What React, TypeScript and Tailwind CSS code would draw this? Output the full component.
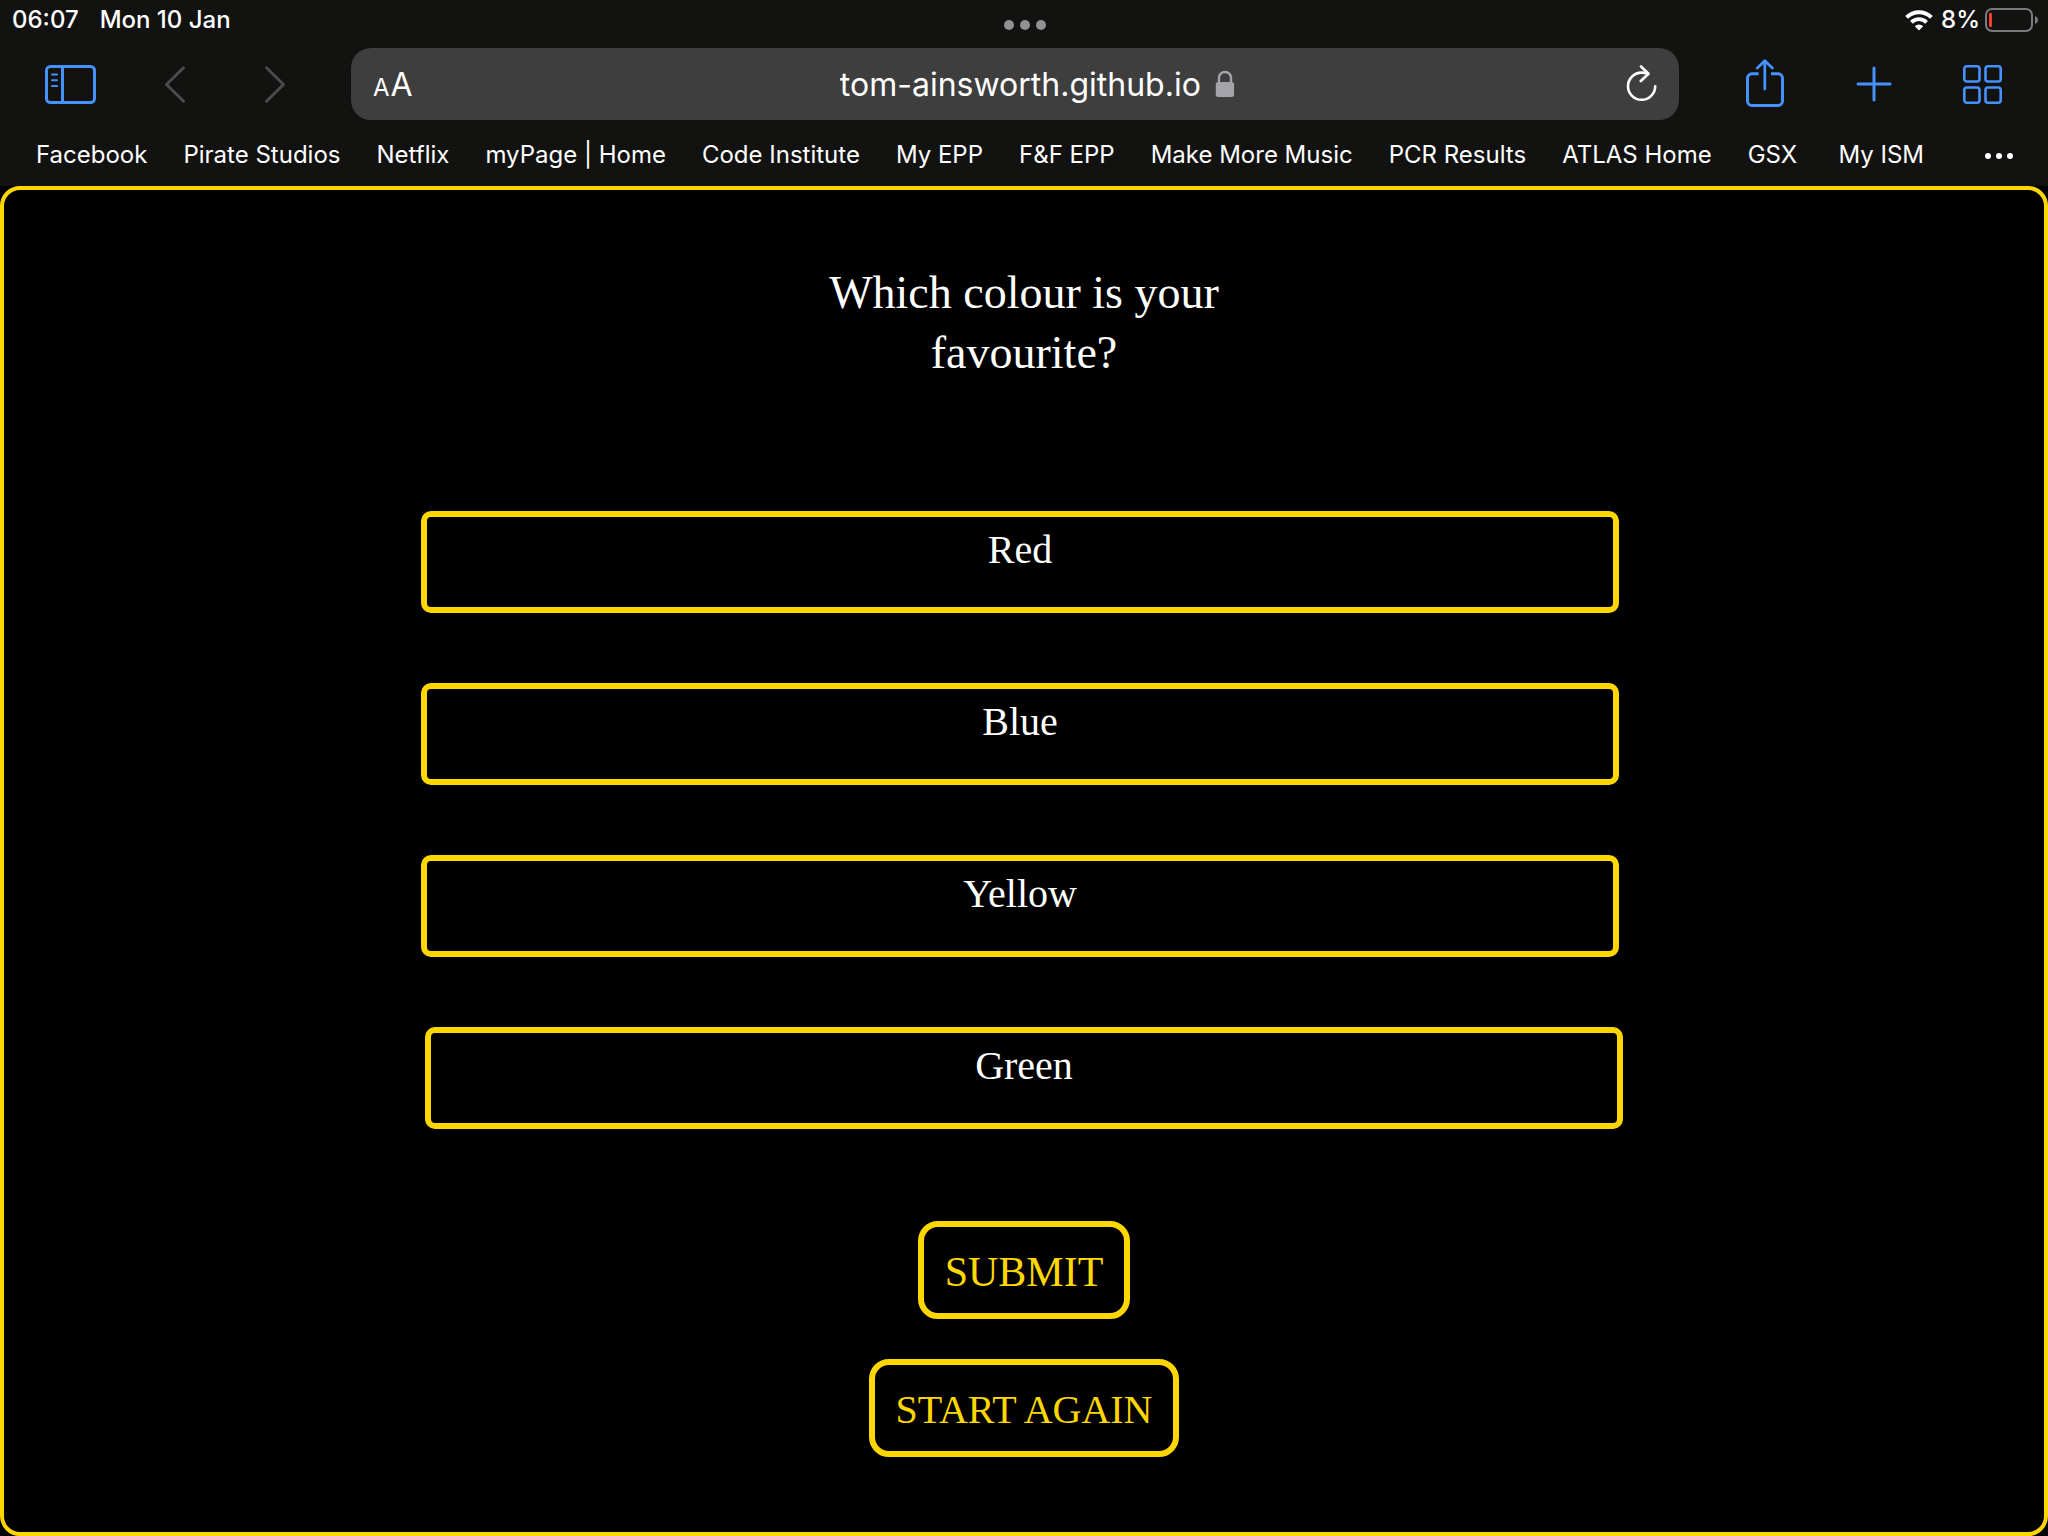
import React from "react";

const BOOKMARKS = [
  "Facebook",
  "Pirate Studios",
  "Netflix",
  "myPage | Home",
  "Code Institute",
  "My EPP",
  "F&F EPP",
  "Make More Music",
  "PCR Results",
  "ATLAS Home",
  "GSX",
  "My ISM",
];

const OPTIONS = ["Red", "Blue", "Yellow", "Green"];

function StatusBar() {
  return (
    <div className="grid h-12 grid-cols-3 pl-3 pr-[10px] text-[24px] leading-10 font-medium">
      <div className="flex gap-[21px]">
        <span>06:07</span>
        <span>Mon 10 Jan</span>
      </div>
      <button aria-label="Multitasking" className="flex items-center justify-center gap-[6px] pt-[2px]">
        <span className="size-[10px] rounded-full bg-[#929292]" />
        <span className="size-[10px] rounded-full bg-[#929292]" />
        <span className="size-[10px] rounded-full bg-[#929292]" />
      </button>
      <div className="flex h-10 items-center justify-end">
        <svg width="28" height="21" viewBox="0 0 28 21" fill="none" aria-label="Wi-Fi">
          <path d="M1.6 7.4a17.6 17.6 0 0 1 24.8 0" stroke="#fff" strokeWidth="4" />
          <path d="M6.4 12.3a10.8 10.8 0 0 1 15.2 0" stroke="#fff" strokeWidth="3.8" />
          <path d="M14 20.6l-4.2-4.3a6 6 0 0 1 8.4 0z" fill="#fff" />
        </svg>
        <span className="ml-2 mr-[5px]">8%</span>
        <svg width="53" height="24" viewBox="0 0 53 24" fill="none" aria-label="Battery">
          <rect x="1" y="1" width="46" height="22" rx="6" stroke="#7b7b7b" strokeWidth="2" />
          <path d="M50 8c2 .8 3 2.200 3 4s-1 3.200-3 4z" fill="#7b7b7b" />
          <rect x="4" y="5" width="3" height="14" rx="1.200" fill="#ff3b30" />
        </svg>
      </div>
    </div>
  );
}

function Toolbar() {
  return (
    <div className="flex h-[72px] items-stretch pl-5 pr-[11px] text-[#4592fd]">
      <button aria-label="Sidebar" className="flex w-[100px] items-center justify-center">
        <svg width="51" height="39" viewBox="45 65 51 39" fill="none" stroke="currentColor" strokeWidth="3">
          <rect x="46.500" y="66.500" width="48" height="36" rx="4" />
          <path d="M62.500 66v37" />
          <path d="M52 74.500h5M52 80.300h5M52 86h5" strokeWidth="2" strokeLinecap="round" />
        </svg>
      </button>
      <button aria-label="Back" className="ml-[5px] flex w-[100px] items-center justify-center text-[#4b4b4b]">
        <svg width="22" height="37" viewBox="164.500 65.500 22 37" fill="none" stroke="currentColor" strokeWidth="3" strokeLinecap="round" strokeLinejoin="round">
          <path d="M184 67.300L167 84l17 16.700" />
        </svg>
      </button>
      <button aria-label="Forward" className="flex w-[100px] items-center justify-center text-[#4b4b4b]">
        <svg width="22" height="37" viewBox="264 65.500 22 37" fill="none" stroke="currentColor" strokeWidth="3" strokeLinecap="round" strokeLinejoin="round">
          <path d="M266.500 67.300L283.500 84l-17 16.700" />
        </svg>
      </button>
      <div className="ml-[26px] mr-[31px] flex flex-1 items-center rounded-[20px] bg-[#3e3e3e] pl-[22px] pr-[21px] text-white">
        <button aria-label="Page settings" className="flex items-baseline gap-px pt-px leading-none">
          <span className="text-[24px]">A</span>
          <span className="text-[32px]">A</span>
        </button>
        <div className="flex flex-1 items-center justify-center gap-[14px] pl-9">
          <input
            aria-label="Address"
            defaultValue="tom-ainsworth.github.io"
            className="field-sizing-content bg-transparent pt-[2px] text-[32px] leading-[44px] outline-none"
          />
          <svg width="20" height="28" viewBox="1215 69 20 28" fill="none" aria-label="Secure">
            <path d="M1219 82v-5.500a6 5.500 0 0 1 12 0V82" stroke="#a5a4ab" strokeWidth="2.400" />
            <rect x="1215.800" y="81" width="18.300" height="15" rx="2.500" fill="#a5a4ab" />
          </svg>
        </div>
        <button aria-label="Reload" className="flex">
          <svg width="32" height="38" viewBox="1626 65 32 38" fill="none" stroke="currentColor" strokeWidth="2.600" strokeLinecap="round" strokeLinejoin="round">
            <path d="M1655.200 86.200a13.600 13.600 0 1 1-13.600-13.600q3.200 0 6 .9" />
            <path d="M1641 66.500l7.500 7.200-7.700 7.300" />
          </svg>
        </button>
      </div>
      <button aria-label="Share" className="flex w-[109px] items-center justify-center">
        <svg width="40" height="50" viewBox="1745 59 40 50" fill="none" stroke="currentColor" strokeWidth="3" strokeLinecap="butt" strokeLinejoin="round">
          <path d="M1758.700 73.800H1752a4.500 4.500 0 0 0-4.500 4.500V101a4.500 4.500 0 0 0 4.500 4.500h26a4.500 4.500 0 0 0 4.500-4.500V78.300a4.500 4.500 0 0 0-4.500-4.500h-7" />
          <path d="M1764.800 61.500V89M1757.300 68l7.500-7.200 7.500 7.200" strokeWidth="2.800" strokeLinecap="round" />
        </svg>
      </button>
      <button aria-label="New tab" className="flex w-[109px] items-center justify-center">
        <svg width="36" height="36" viewBox="0 0 36 36" fill="none" stroke="currentColor" strokeWidth="3" strokeLinecap="round">
          <path d="M18 2v32M2 18h32" />
        </svg>
      </button>
      <button aria-label="Tab overview" className="flex w-[109px] items-center justify-center">
        <svg width="39" height="39" viewBox="0 0 39 39" fill="none" stroke="currentColor" strokeWidth="2.600">
          <rect x="1.300" y="1.300" width="15.200" height="15.200" rx="2.500" />
          <rect x="22.500" y="1.300" width="15.200" height="15.200" rx="2.500" />
          <rect x="1.300" y="22.500" width="15.200" height="15.200" rx="2.500" />
          <rect x="22.500" y="22.500" width="15.200" height="15.200" rx="2.500" />
        </svg>
      </button>
    </div>
  );
}

function BookmarksBar() {
  return (
    <nav aria-label="Favourites" className="flex h-[66px] items-center pl-9 pr-[35px] pt-1 text-[24px] leading-8">
      <div className="flex flex-1 gap-9 whitespace-nowrap">
        {BOOKMARKS.map((name) => (
          <a key={name} href="#" className="last:ml-auto">
            {name}
          </a>
        ))}
      </div>
      <button aria-label="More favourites" className="ml-[61px] flex gap-[5px] pt-px">
        <span className="size-[6px] rounded-full bg-white" />
        <span className="size-[6px] rounded-full bg-white" />
        <span className="size-[6px] rounded-full bg-white" />
      </button>
    </nav>
  );
}

export default function App() {
  return (
    <div className="flex min-h-screen flex-col bg-black text-white">
      <header className="bg-[#121211] font-['Inter',sans-serif]">
        <StatusBar />
        <Toolbar />
        <BookmarksBar />
      </header>
      <main className="flex flex-1 flex-col items-center rounded-[20px] border-4 border-[#ffd700] px-4 pb-[75px] pt-[73px] font-['Liberation_Serif',serif]">
        <h1 className="max-w-[500px] text-center text-[46px] leading-[60px]">Which colour is your favourite?</h1>
        <ul className="mt-32 flex w-full flex-col gap-[70px]">
          {OPTIONS.map((option) => (
            <li key={option} className="flex justify-center pr-2 last:pr-0">
              <button className="flex h-[102px] w-full max-w-[1198px] justify-center rounded-[10px] border-6 border-[#ffd700] text-[40px] leading-[66px]">
                {option}
              </button>
            </li>
          ))}
        </ul>
        <div className="mt-[92px] flex flex-col items-center gap-10 text-[#ffd700]">
          <button className="h-[98px] rounded-[20px] border-6 border-[#ffd700] px-[21px] pt-[3px] text-[42px] leading-[60px]">SUBMIT</button>
          <button className="h-[98px] rounded-[20px] border-6 border-[#ffd700] px-5 pt-[3px] text-[40px] leading-[60px]">START AGAIN</button>
        </div>
      </main>
    </div>
  );
}
